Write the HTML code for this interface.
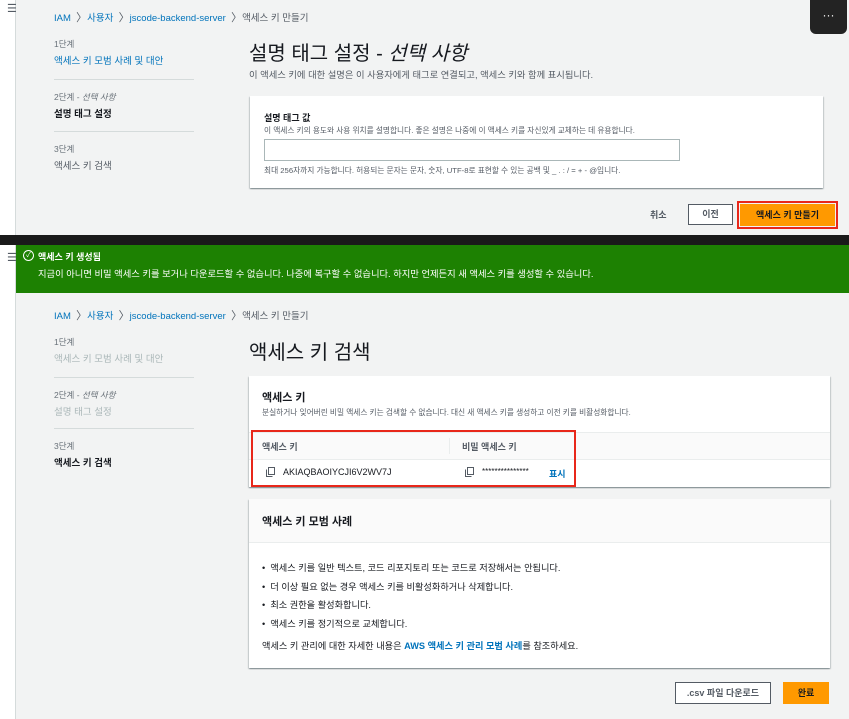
<!DOCTYPE html>
<html><head><meta charset="utf-8"><style>
*{box-sizing:border-box;margin:0;padding:0}
body{width:849px;height:719px;overflow:hidden;background:#f2f3f3;font-family:"Liberation Sans","Noto Sans CJK KR",sans-serif;color:#16191f;position:relative;font-size:9px}
.a{position:absolute;white-space:nowrap}
.side{position:absolute;left:0;width:16px;background:#fff;border-right:1px solid #d5dbdb}
.ham{position:absolute;left:7px;font-size:11px;color:#545b64}
.bc{color:#0073bb;font-size:9.5px}
.bc span.g{color:#545b64}
.bc span.s{color:#545b64;font-size:11px}
.lbl{color:#687078;font-size:8.5px}
.lnk{color:#0073bb;font-size:9.5px}
.gr{color:#aab7b8;font-size:9.5px}
.bd{font-weight:bold;font-size:9.5px}
.hr{position:absolute;left:54px;width:140px;height:1px;background:#d5dbdb}
.card{position:absolute;background:#fff;box-shadow:0 1px 1px rgba(0,28,36,.3),1px 1px 1px rgba(0,28,36,.15),-1px 1px 1px rgba(0,28,36,.15)}
.btn{position:absolute;border:1px solid #545b64;background:#fff;font-weight:bold;font-size:9px;text-align:center;color:#545b64}
.or{position:absolute;background:#ff9900;font-weight:bold;font-size:9px;text-align:center;color:#16191f}
</style></head><body>
<div class="side" style="top:0;height:235px"></div>
<div class="ham" style="top:2px">☰</div>
<div class="a bc" style="left:54px;top:9px">IAM &nbsp;<span class="s">〉</span>사용자 &nbsp;<span class="s">〉</span>jscode-backend-server &nbsp;<span class="s">〉</span><span class="g">액세스 키 만들기</span></div>
<div class="a" style="left:810px;top:0;width:37px;height:34px;background:#232323;border-radius:0 0 6px 6px;color:#fff;text-align:center;font-size:12px;line-height:30px">···</div>
<div class="a lbl" style="left:54px;top:38px">1단계</div>
<div class="a lnk" style="left:54px;top:53px">액세스 키 모범 사례 및 대안</div>
<div class="hr" style="top:79px"></div>
<div class="a lbl" style="left:54px;top:91px">2단계 - <i>선택 사항</i></div>
<div class="a bd" style="left:54px;top:106px">설명 태그 설정</div>
<div class="hr" style="top:131px"></div>
<div class="a lbl" style="left:54px;top:143px">3단계</div>
<div class="a" style="left:54px;top:158px;font-size:9.5px;color:#545b64">액세스 키 검색</div>
<div class="a" style="left:249px;top:37px;font-size:20px">설명 태그 설정 - <i>선택 사항</i></div>
<div class="a" style="left:249px;top:67px;font-size:9.3px;color:#545b64">이 액세스 키에 대한 설명은 이 사용자에게 태그로 연결되고, 액세스 키와 함께 표시됩니다.</div>
<div class="card" style="left:250px;top:96px;width:573px;height:92px"></div>
<div class="a bd" style="left:264px;top:111px;font-size:9px">설명 태그 값</div>
<div class="a" style="left:264px;top:125px;font-size:7.7px;color:#545b64">이 액세스 키의 용도와 사용 위치를 설명합니다. 좋은 설명은 나중에 이 액세스 키를 자신있게 교체하는 데 유용합니다.</div>
<div class="a" style="left:264px;top:139px;width:416px;height:22px;border:1px solid #aab7b8;background:#fff"></div>
<div class="a" style="left:264px;top:165px;font-size:7.7px;color:#545b64">최대 256자까지 가능합니다. 허용되는 문자는 문자, 숫자, UTF-8로 표현할 수 있는 공백 및 _ . : / = + - @입니다.</div>
<div class="a" style="left:650px;top:208px;font-weight:bold;font-size:9px;color:#545b64">취소</div>
<div class="btn" style="left:688px;top:204px;width:45px;height:21px;line-height:19px">이전</div>
<div class="a" style="left:737px;top:201px;width:101px;height:28px;border:2px solid #e8271a"></div>
<div class="or" style="left:740px;top:204px;width:95px;height:22px;line-height:22px">액세스 키 만들기</div>
<div class="a" style="left:0;top:235px;width:849px;height:10px;background:#1a1a1a"></div>
<div class="side" style="top:245px;height:474px"></div>
<div class="ham" style="top:251px">☰</div>
<div class="a" style="left:16px;top:245px;width:833px;height:48px;background:#1d8102"></div>
<div class="a" style="left:23px;top:250px;width:11px;height:11px;border:1.2px solid #fff;border-radius:50%;color:#fff;font-size:7px;line-height:9px;text-align:center">✓</div>
<div class="a" style="left:38px;top:250px;color:#fff;font-weight:bold;font-size:9px">액세스 키 생성됨</div>
<div class="a" style="left:38px;top:266px;color:#fff;font-size:9.3px">지금이 아니면 비밀 액세스 키를 보거나 다운로드할 수 없습니다. 나중에 복구할 수 없습니다. 하지만 언제든지 새 액세스 키를 생성할 수 있습니다.</div>
<div class="a bc" style="left:54px;top:307px">IAM &nbsp;<span class="s">〉</span>사용자 &nbsp;<span class="s">〉</span>jscode-backend-server &nbsp;<span class="s">〉</span><span class="g">액세스 키 만들기</span></div>
<div class="a lbl" style="left:54px;top:336px">1단계</div>
<div class="a gr" style="left:54px;top:351px">액세스 키 모범 사례 및 대안</div>
<div class="hr" style="top:377px"></div>
<div class="a lbl" style="left:54px;top:389px">2단계 - <i>선택 사항</i></div>
<div class="a gr" style="left:54px;top:404px">설명 태그 설정</div>
<div class="hr" style="top:428px"></div>
<div class="a lbl" style="left:54px;top:440px">3단계</div>
<div class="a bd" style="left:54px;top:455px">액세스 키 검색</div>
<div class="a" style="left:249px;top:336px;font-size:20px">액세스 키 검색</div>
<div class="card" style="left:249px;top:376px;width:581px;height:111px"></div>
<div class="a bd" style="left:262px;top:389px;font-size:11px">액세스 키</div>
<div class="a" style="left:262px;top:407px;font-size:7.7px;color:#545b64">분실하거나 잊어버린 비밀 액세스 키는 검색할 수 없습니다. 대신 새 액세스 키를 생성하고 이전 키를 비활성화합니다.</div>
<div class="a" style="left:249px;top:432px;width:581px;height:28px;background:#fafafa;border-top:1px solid #eaeded;border-bottom:1px solid #eaeded"></div>
<div class="a" style="left:449px;top:438px;width:1px;height:16px;background:#eaeded"></div>
<div class="a" style="left:262px;top:440px;font-size:9px;color:#545b64;font-weight:bold">액세스 키</div>
<div class="a" style="left:462px;top:440px;font-size:9px;color:#545b64;font-weight:bold">비밀 액세스 키</div>
<svg class="a" style="left:266px;top:467px" width="9" height="10" viewBox="0 0 9 10"><rect x="2.5" y="0.5" width="6" height="7" fill="none" stroke="#545b64"/><path d="M0.5 2.5v7h6" fill="none" stroke="#545b64"/></svg>
<div class="a" style="left:283px;top:467px;font-size:9px">AKIAQBAOIYCJI6V2WV7J</div>
<svg class="a" style="left:465px;top:467px" width="9" height="10" viewBox="0 0 9 10"><rect x="2.5" y="0.5" width="6" height="7" fill="none" stroke="#545b64"/><path d="M0.5 2.5v7h6" fill="none" stroke="#545b64"/></svg>
<div class="a" style="left:482px;top:467px;font-size:8px">***************</div>
<div class="a" style="left:549px;top:467px;font-size:9px;color:#0073bb;font-weight:bold">표시</div>
<div class="a" style="left:251px;top:430px;width:325px;height:57px;border:2px solid #e8271a"></div>
<div class="card" style="left:249px;top:499px;width:581px;height:169px"></div>
<div class="a" style="left:249px;top:499px;width:581px;height:44px;background:#fafafa;border-bottom:1px solid #eaeded"></div>
<div class="a bd" style="left:262px;top:513px;font-size:11px">액세스 키 모범 사례</div>
<div class="a" style="left:262px;top:559px;font-size:9.2px;line-height:18.7px">• &nbsp;액세스 키를 일반 텍스트, 코드 리포지토리 또는 코드로 저장해서는 안됩니다.<br>• &nbsp;더 이상 필요 없는 경우 액세스 키를 비활성화하거나 삭제합니다.<br>• &nbsp;최소 권한을 활성화합니다.<br>• &nbsp;액세스 키를 정기적으로 교체합니다.</div>
<div class="a" style="left:262px;top:638px;font-size:9.2px">액세스 키 관리에 대한 자세한 내용은 <span style="color:#0073bb;font-weight:bold">AWS 액세스 키 관리 모범 사례</span>를 참조하세요.</div>
<div class="btn" style="left:675px;top:682px;width:96px;height:22px;line-height:20px">.csv 파일 다운로드</div>
<div class="or" style="left:783px;top:682px;width:46px;height:22px;line-height:22px">완료</div>
</body></html>
